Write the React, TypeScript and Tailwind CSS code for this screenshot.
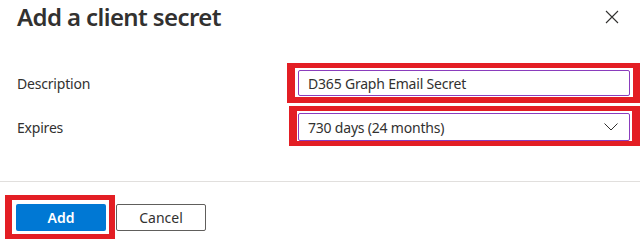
export default function App() {
  const font = { fontFamily: '"Noto Sans", "Liberation Sans", Arial, sans-serif' };

  return (
    <div className="w-[642px] h-[244px] bg-white text-[#323130] overflow-hidden" style={font}>
      {/* header */}
      <div className="flex justify-between items-start pl-[17px] pr-[23px] pt-[1px] h-[33px]">
        <h1 className="text-[24px] leading-[32px] font-semibold tracking-[-0.6px]">Add a client secret</h1>
        <svg width="14" height="14" viewBox="0 0 14 14" className="mt-[9px]">
          <path d="M1 1 L13 13 M13 1 L1 13" stroke="#323130" strokeWidth="1.1" fill="none" />
        </svg>
      </div>

      {/* form */}
      <div className="pl-[17px] pr-[12px]">
        <div className="flex items-center mt-[37px] h-[26px]">
          <label className="w-[281px] text-[14px] tracking-[-0.2px]">Description</label>
          <div className="relative w-[332px] h-[26px]">
            <div className="absolute -left-[11px] -top-[7px] -right-[10px] -bottom-[7px] border-solid border-[#e31e24] border-l-[8px] border-t-[5px] border-r-[7px] border-b-[6px]" />
            <div className="relative h-full border border-[#8a3dbd] rounded-[2px] pl-[9px] flex items-center text-[14px] tracking-[-0.2px]">
              D365 Graph Email Secret
            </div>
          </div>
        </div>

        <div className="flex items-center mt-[17px] h-[28px]">
          <label className="w-[281px] text-[14px] tracking-[-0.2px]">Expires</label>
          <div className="relative w-[332px] h-[28px]">
            <div className="absolute -left-[9px] -top-[7px] -right-[10px] -bottom-[5px] border-solid border-[#e31e24] border-l-[8px] border-t-[5px] border-r-[8px] border-b-[5px]" />
            <div className="relative h-full border border-[#8a3dbd] rounded-[2px] pl-[9px] pr-[11px] flex items-center justify-between text-[14px] tracking-[-0.2px]">
              <span>730 days (24 months)</span>
              <svg width="14" height="8" viewBox="0 0 14 8">
                <path d="M0.5 0.5 L7 7 L13.5 0.5" stroke="#323130" strokeWidth="1" fill="none" />
              </svg>
            </div>
          </div>
        </div>
      </div>

      <div className="mt-[40px] h-px bg-[#e1dfdd] w-[640px]" />

      {/* footer */}
      <div className="flex gap-[10px] pl-[16px] mt-[22px]">
        <div className="relative">
          <div className="absolute -left-[11px] -top-[9px] -right-[9px] -bottom-[8px] border-solid border-[#e31e24] border-l-[7px] border-t-[5px] border-r-[6px] border-b-[5px]" />
          <button className="relative w-[90px] h-[27px] bg-[#0078d4] text-white text-[14px] font-semibold rounded-[2px]">
            Add
          </button>
        </div>
        <button className="w-[90px] h-[27px] border border-[#605e5c] rounded-[2px] text-[14px] bg-white">
          Cancel
        </button>
      </div>
    </div>
  );
}
